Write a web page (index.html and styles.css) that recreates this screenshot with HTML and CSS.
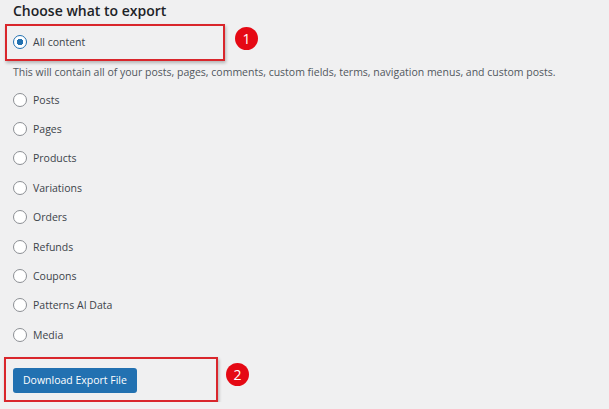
FILE: index.html
```html
<!DOCTYPE html>
<html lang="en">
<head>
    <meta charset="UTF-8" />
    <title>Export</title>
    <link rel="stylesheet" href="styles.css">
</head>
<body>

<div class="export-page">
    <h2>Choose what to export</h2>

    <!-- step 1 -->
    <div class="step">
        <div class="callout callout-first">
            <label class="option"><input type="radio" name="content" checked> All content</label>
        </div>
        <span class="badge badge-first">1</span>
    </div>

    <p class="description">This will contain all of your posts, pages, comments, custom fields, terms, navigation menus, and custom posts.</p>

    <div class="options">
        <label class="option"><input type="radio" name="content"> Posts</label>
        <label class="option"><input type="radio" name="content"> Pages</label>
        <label class="option"><input type="radio" name="content"> Products</label>
        <label class="option"><input type="radio" name="content"> Variations</label>
        <label class="option"><input type="radio" name="content"> Orders</label>
        <label class="option"><input type="radio" name="content"> Refunds</label>
        <label class="option"><input type="radio" name="content"> Coupons</label>
        <label class="option"><input type="radio" name="content"> Patterns AI Data</label>
        <label class="option"><input type="radio" name="content"> Media</label>
    </div>

    <!-- step 2 -->
    <div class="step">
        <div class="callout callout-second">
            <button class="download-btn">Download Export File</button>
        </div>
        <span class="badge badge-second">2</span>
    </div>
</div>

</body>
</html>
```

FILE: styles.css
```css
body {
    margin: 0;
    background-color: #f0f0f1;
    color: #3c434a;
    font-family: "Open Sans", "Noto Sans", sans-serif;
    font-size: 10.5px;
}
.export-page {
    padding-top: 1px;
}
h2 {
    margin: 0;
    padding-left: 13px;
    font-size: 14px;
    font-weight: 600;
    line-height: 20px;
    color: #1d2327;
}
.step {
    display: flex;
    align-items: center;
}
.callout {
    border: 2px solid #d9262c;
    box-shadow: 1px 2px 3px rgba(0, 0, 0, 0.25);
    box-sizing: border-box;
}
.callout-first {
    margin-top: 3px;
    margin-left: 5px;
    width: 220px;
    height: 37px;
    padding-left: 6px;
    display: flex;
    align-items: center;
}
.callout-second {
    margin-top: 7px;
    margin-left: 4px;
    width: 214px;
    height: 45px;
    padding: 9px 0 0 7px;
}
.badge {
    width: 23px;
    height: 23px;
    border-radius: 50%;
    background-color: #e50914;
    color: #fff;
    font-size: 14px;
    line-height: 23px;
    text-align: center;
}
.badge-first {
    margin-left: 10px;
    margin-bottom: 6px;
}
.badge-second {
    margin-left: 8px;
    margin-bottom: 2px;
}
.description {
    margin: 2px 0 0 13px;
    line-height: 18px;
    color: #50575e;
}
.options {
    margin-top: 4px;
    padding-left: 13px;
}
.option {
    display: flex;
    align-items: center;
    gap: 6px;
    height: 29.4px;
}
.option input {
    appearance: none;
    margin: 0;
    width: 14px;
    height: 14px;
    border: 1px solid #8c8f94;
    border-radius: 50%;
    background-color: #fff;
}
.option input:checked {
    border-color: #2271b1;
    background: radial-gradient(circle, #2271b1 0 3px, #fff 3.5px);
}
.download-btn {
    height: 25px;
    padding: 0 10px;
    border: none;
    border-radius: 3px;
    background-color: #2271b1;
    color: #fff;
    font-family: inherit;
    font-size: 10.5px;
}
```
